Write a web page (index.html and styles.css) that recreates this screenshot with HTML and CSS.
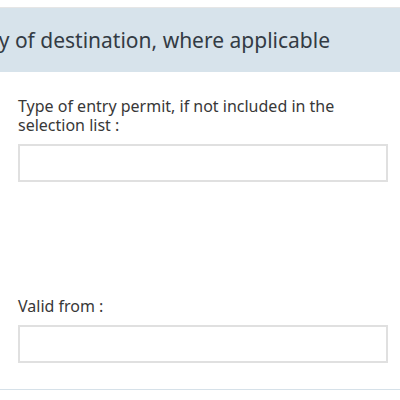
FILE: index.html
```html
<!DOCTYPE html>
<html lang="en">
<head>
<meta charset="utf-8">
<title>Entry permit</title>
<link rel="stylesheet" href="styles.css">
</head>
<body>
<div class="page">
  <section class="panel">
    <h2 class="panel-title"><span class="panel-title-text">Entry permit for the country of destination, where applicable</span></h2>
    <div class="panel-body">
      <div class="field">
        <label class="field-label" for="permit-type">Type of entry permit, if not included in the selection list :</label>
        <input class="field-input" id="permit-type" type="text">
      </div>
      <div class="spacer"></div>
      <div class="field">
        <label class="field-label" for="valid-from">Valid from :</label>
        <input class="field-input" id="valid-from" type="text">
      </div>
    </div>
  </section>
</div>
</body>
</html>
```
FILE: styles.css
```css
* { box-sizing: border-box; }
html, body { margin: 0; padding: 0; background: #fff; }
body {
  font-family: "Noto Sans", "Open Sans", sans-serif;
  color: #3a3a3a;
  overflow: hidden;
}
.page {
  padding-top: 7px;
}
.panel {
  border-top: 1px solid #e6e6e6;
  border-bottom: 1px solid #d6e1e9;
}
.panel-title {
  margin: 0;
  height: 64px;
  background: #d7e3eb;
  display: flex;
  align-items: center;
  justify-content: flex-end;
  padding-right: 70px;
  overflow: hidden;
  white-space: nowrap;
  font-weight: normal;
  font-size: 21px;
  color: #333b44;
}
.panel-body {
  padding: 25px 12px 26px 18px;
}
.field {
  display: flex;
  flex-direction: column;
}
.field-label {
  font-size: 16px;
  line-height: 19px;
  color: #383838;
  margin-bottom: 9px;
}
.field-input {
  height: 38px;
  border: 2px solid #e0e0e0;
  background: #fff;
  font: inherit;
  padding: 4px 8px;
}
.spacer { height: 115px; }
```
